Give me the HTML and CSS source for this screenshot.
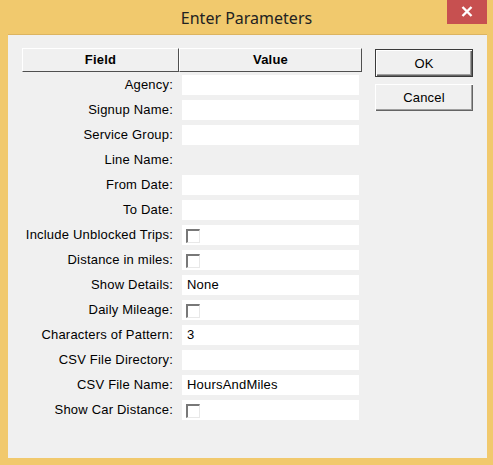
FILE: index.html
```html
<!DOCTYPE html>
<html>
<head>
<meta charset="utf-8">
<link rel="stylesheet" href="styles.css">
</head>
<body>
<div class="frame">
  <div class="titlebar">
    <span></span>
    <div class="title">Enter Parameters</div>
    <button class="close" aria-label="Close">
      <svg width="12" height="11" viewBox="0 0 12 11"><path d="M1.5 1 L10.5 10 M10.5 1 L1.5 10" stroke="#fff" stroke-width="2.4" fill="none"/></svg>
    </button>
  </div>
  <div class="client">
    <div class="panel">
      <div class="header">
        <div class="hcell hfield">Field</div>
        <div class="hcell hvalue">Value</div>
      </div>
      <div class="rows">
        <div class="label">Agency:</div><div class="cell"></div>
        <div class="label">Signup Name:</div><div class="cell"></div>
        <div class="label">Service Group:</div><div class="cell"></div>
        <div class="label">Line Name:</div><div class="cell empty"></div>
        <div class="label">From Date:</div><div class="cell"></div>
        <div class="label">To Date:</div><div class="cell"></div>
        <div class="label">Include Unblocked Trips:</div><div class="cell"><span class="check"></span></div>
        <div class="label">Distance in miles:</div><div class="cell"><span class="check"></span></div>
        <div class="label">Show Details:</div><div class="cell">None</div>
        <div class="label">Daily Mileage:</div><div class="cell"><span class="check"></span></div>
        <div class="label">Characters of Pattern:</div><div class="cell">3</div>
        <div class="label">CSV File Directory:</div><div class="cell"></div>
        <div class="label">CSV File Name:</div><div class="cell">HoursAndMiles</div>
        <div class="label">Show Car Distance:</div><div class="cell"><span class="check"></span></div>
      </div>
    </div>
    <div class="buttons">
      <button class="btn default">OK</button>
      <button class="btn">Cancel</button>
    </div>
  </div>
</div>
</body>
</html>
```

FILE: styles.css
```css
html, body {
  margin: 0;
  padding: 0;
}
body {
  width: 493px;
  height: 465px;
  background: #f1c96d;
  overflow: hidden;
}
.frame {
  width: 493px;
  height: 465px;
  display: flex;
  flex-direction: column;
}
.titlebar {
  height: 34px;
  padding: 0 6px;
  display: grid;
  grid-template-columns: 1fr auto 1fr;
  align-items: start;
}
.title {
  font-family: "Noto Sans", "Open Sans", sans-serif;
  font-size: 16px;
  line-height: 20px;
  color: #222;
  margin-top: 8px;
}
.close {
  justify-self: end;
  width: 40px;
  height: 24px;
  border: none;
  padding: 0;
  margin: 0;
  background: #c75050;
  display: flex;
  align-items: center;
  justify-content: center;
}
.close svg {
  display: block;
  margin-top: -2px;
}
.client {
  box-sizing: border-box;
  margin: 0 6px 0 8px;
  height: 424px;
  background: #f0f0f0;
  border-top: 1px solid #dcb461;
  padding: 13px 0 0 14px;
  display: flex;
  gap: 13px;
  align-items: flex-start;
  font-family: "Liberation Sans", Arial, sans-serif;
  font-size: 13px;
  letter-spacing: 0.2px;
  color: #000;
}
.panel {
  width: 340px;
}
.header {
  display: flex;
  height: 24px;
}
.hcell {
  box-sizing: border-box;
  height: 24px;
  font-weight: bold;
  text-align: center;
  line-height: 22px;
  background: #f0f0f0;
  border-top: 1px solid #fff;
  border-left: 1px solid #fff;
  border-bottom: 1px solid #505050;
  border-right: 1px solid #505050;
}
.hfield {
  width: 157px;
}
.hvalue {
  width: 183px;
}
.rows {
  margin-top: 3px;
  display: grid;
  grid-template-columns: 160px 177px;
  grid-auto-rows: 20px;
  row-gap: 5px;
}
.label {
  text-align: right;
  padding-right: 9px;
  line-height: 20px;
  white-space: nowrap;
}
.cell {
  background: #fff;
  line-height: 20px;
  padding-left: 5px;
}
.cell.empty {
  background: transparent;
}
.check {
  display: block;
  box-sizing: border-box;
  width: 14px;
  height: 14px;
  margin: 4px 0 0 -1px;
  background: #fff;
  border-top: 2px solid #787878;
  border-left: 2px solid #787878;
  border-right: 1px solid #e8e8e8;
  border-bottom: 1px solid #e8e8e8;
}
.buttons {
  margin-top: 1px;
  display: flex;
  flex-direction: column;
  gap: 7px;
}
.btn {
  box-sizing: border-box;
  width: 98px;
  height: 27px;
  margin: 0;
  padding: 0;
  font-family: "Liberation Sans", Arial, sans-serif;
  font-size: 13px;
  letter-spacing: 0.2px;
  color: #000;
  background: #f0f0f0;
  border: none;
  box-shadow: inset 1px 1px 0 #fff, inset -1px -1px 0 #646464, inset -2px -2px 0 #a0a0a0;
}
.btn.default {
  height: 28px;
  border: 1px solid #3a3a3a;
}
```
